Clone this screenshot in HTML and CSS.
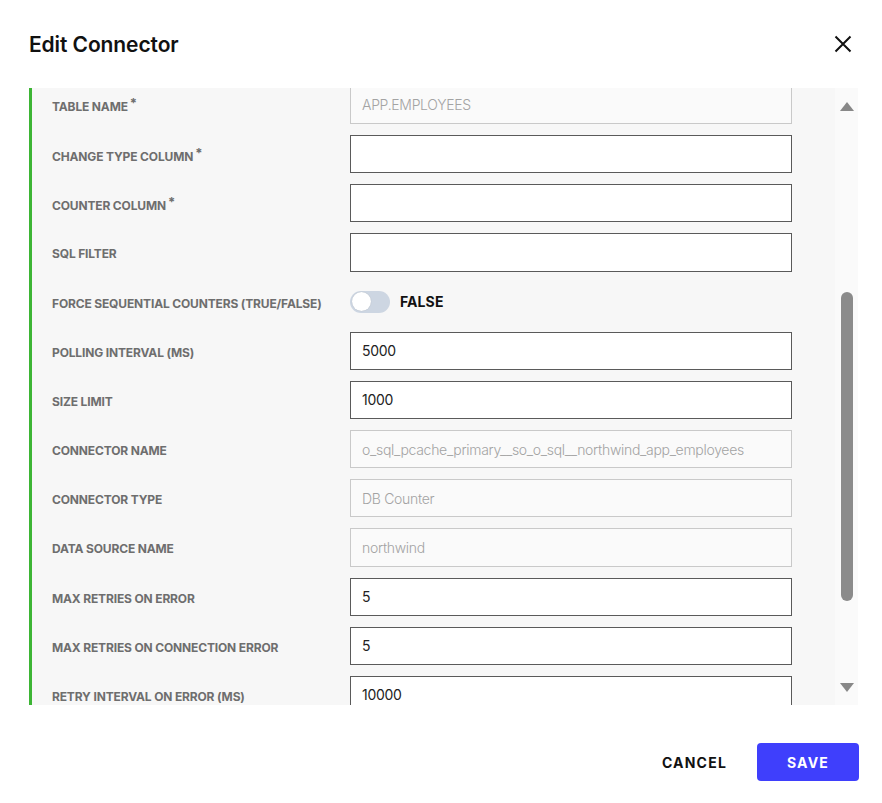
FILE: index.html
```html
<!DOCTYPE html>
<html>
<head>
<meta charset="utf-8">
<link rel="stylesheet" href="styles.css">
</head>
<body>
<div class="dialog">
  <header class="header">
    <h1 class="title">Edit Connector</h1>
    <button class="close" aria-label="Close">
      <svg width="18" height="18" viewBox="0 0 18 18"><path d="M1.5 1.5L16.5 16.5M16.5 1.5L1.5 16.5" stroke="#111" stroke-width="2" fill="none"/></svg>
    </button>
  </header>
  <div class="scroll-area">
    <div class="viewport">
      <div class="form">
        <div class="row"><label class="label">TABLE NAME<span class="req">*</span></label><div class="input disabled">APP.EMPLOYEES</div></div>
        <div class="row"><label class="label">CHANGE TYPE COLUMN<span class="req">*</span></label><div class="input"></div></div>
        <div class="row"><label class="label">COUNTER COLUMN<span class="req">*</span></label><div class="input"></div></div>
        <div class="row"><label class="label">SQL FILTER</label><div class="input"></div></div>
        <div class="row"><label class="label">FORCE SEQUENTIAL COUNTERS (TRUE/FALSE)</label><div class="toggle-wrap"><span class="toggle"><span class="knob"></span></span><span class="toggle-text">FALSE</span></div></div>
        <div class="row"><label class="label">POLLING INTERVAL (MS)</label><div class="input">5000</div></div>
        <div class="row"><label class="label">SIZE LIMIT</label><div class="input">1000</div></div>
        <div class="row"><label class="label">CONNECTOR NAME</label><div class="input disabled">o_sql_pcache_primary__so_o_sql__northwind_app_employees</div></div>
        <div class="row"><label class="label">CONNECTOR TYPE</label><div class="input disabled">DB Counter</div></div>
        <div class="row"><label class="label">DATA SOURCE NAME</label><div class="input disabled">northwind</div></div>
        <div class="row"><label class="label">MAX RETRIES ON ERROR</label><div class="input">5</div></div>
        <div class="row"><label class="label">MAX RETRIES ON CONNECTION ERROR</label><div class="input">5</div></div>
        <div class="row"><label class="label">RETRY INTERVAL ON ERROR (MS)</label><div class="input">10000</div></div>
      </div>
    </div>
    <div class="scrollbar">
      <span class="arrow up"></span>
      <div class="track"><div class="thumb"></div></div>
      <span class="arrow down"></span>
    </div>
  </div>
  <footer class="footer">
    <button class="btn cancel">CANCEL</button>
    <button class="btn save">SAVE</button>
  </footer>
</div>
</body>
</html>
```

FILE: styles.css
```css
* { box-sizing: border-box; }
html, body { margin: 0; padding: 0; background: #fff; }
body { font-family: Inter, "Noto Sans", "Liberation Sans", sans-serif; color: #111; }

.dialog { width: 882px; height: 803px; display: flex; flex-direction: column; }

.header {
  height: 88px;
  display: flex;
  align-items: center;
  justify-content: space-between;
  padding: 0 30px 0 29px;
}
.title { margin: 0; font-size: 21px; font-weight: 600; letter-spacing: -0.1px; color: #111; padding-top: 1px; }
.close { border: 0; background: none; padding: 0; width: 18px; height: 18px; display: flex; cursor: pointer; margin-bottom: 1px; }

.scroll-area {
  height: 617px;
  margin: 0 24px 0 29px;
  border-left: 3px solid #3db535;
  background: #f7f7f7;
  display: flex;
}
.viewport { flex: 1; overflow: hidden; }
.form {
  margin-top: -2.2px;
  padding-left: 20px;
  display: flex;
  flex-direction: column;
  gap: 11px;
}
.row { display: flex; align-items: center; height: 38.18px; }
.label {
  width: 298px;
  font-size: 12px;
  font-weight: 700;
  color: #6e6e6e;
  letter-spacing: -0.15px;
  padding-top: 3px;
}
.req { font-size: 13px; position: relative; top: -3px; margin-left: 2px; }
.input {
  width: 442px;
  height: 38.18px;
  border: 1px solid #5a5a5a;
  background: #fff;
  padding: 0 11px;
  display: flex;
  align-items: center;
  font-size: 14px;
  font-weight: 400;
  color: #222;
  letter-spacing: -0.3px;
}
.input.disabled { border-color: #c9c9c9; color: #a3a3a3; background: #fafafa; font-weight: 300; }

.toggle-wrap { display: flex; align-items: center; gap: 10px; }
.toggle {
  width: 40px; height: 22px; border-radius: 11px; background: #cdd6e2;
  display: flex; align-items: center; padding-left: 2px;
}
.knob { width: 19px; height: 19px; border-radius: 50%; background: #fff; box-shadow: 0 0 1px rgba(0,0,0,0.2); }
.toggle-text { font-size: 14px; font-weight: 700; color: #111; letter-spacing: 0.1px; }

.scrollbar {
  width: 23px;
  background: #fafafa;
  display: flex;
  flex-direction: column;
  align-items: center;
  padding: 14px 0 13px;
}
.arrow { width: 0; height: 0; border-left: 7px solid transparent; border-right: 7px solid transparent; }
.arrow.up { border-bottom: 9px solid #888; }
.arrow.down { border-top: 9px solid #888; }
.track { flex: 1; width: 12px; display: flex; flex-direction: column; padding-top: 181px; padding-bottom: 82px; }
.thumb { flex: 1; background: #8b8b8b; border-radius: 6px; }

.footer {
  flex: 1;
  display: flex;
  justify-content: flex-end;
  align-items: flex-start;
  padding: 38px 23px 0 0;
  gap: 30px;
}
.btn {
  font-family: Inter, "Noto Sans", "Liberation Sans", sans-serif;
  font-size: 14px; font-weight: 700; letter-spacing: 1.2px;
  border: 0; height: 38px; border-radius: 4px; cursor: pointer;
}
.cancel { background: none; color: #111; padding: 0; }
.save { width: 102px; background: #3f3ffc; color: #fff; }
```
